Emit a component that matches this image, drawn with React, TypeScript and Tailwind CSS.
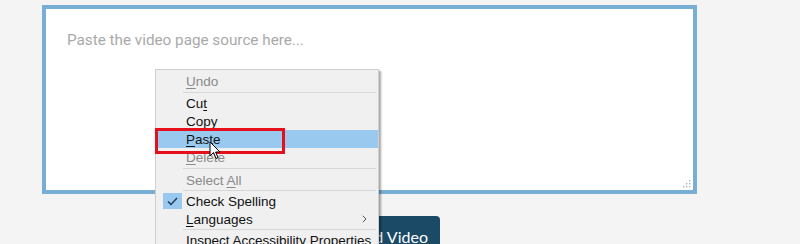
import React from 'react';

const menuFont = { fontFamily: '"Liberation Sans", Arial, sans-serif' };

function Item({
    children,
    disabled,
    active,
    checked,
    submenu,
}: {
    children: React.ReactNode;
    disabled?: boolean;
    active?: boolean;
    checked?: boolean;
    submenu?: boolean;
}) {
    return (
        <div className={`relative flex h-[18px] items-center whitespace-nowrap ${active ? 'bg-[#99c9ef]' : ''}`}>
            <div className="flex w-[30px] shrink-0 justify-center pl-[3px]">
                {checked && (
                    <div className="flex h-[16px] w-[19px] items-center justify-center bg-[#99c9ef]">
                        <svg width="11" height="9" viewBox="0 0 11 9" fill="none">
                            <path d="M1 4.5 L4 7.5 L10 1" stroke="#1e3750" strokeWidth="1.4" />
                        </svg>
                    </div>
                )}
            </div>
            <span className={`pt-[2px] text-[13.5px] leading-none ${disabled ? 'text-[#8a8a8a]' : 'text-[#111]'}`}>{children}</span>
            {submenu && (
                <svg className="absolute right-[11px]" width="5" height="8" viewBox="0 0 5 8" fill="none">
                    <path d="M0.8 0.8 L4 4 L0.8 7.2" stroke="#555" strokeWidth="1" />
                </svg>
            )}
        </div>
    );
}

function Sep({ h = 4 }: { h?: number }) {
    return (
        <div className={`flex items-center pl-[27px] pr-[2px] ${h === 5 ? 'h-[5px]' : h === 3 ? 'h-[3px]' : 'h-[4px]'}`}>
            <div className="h-px w-full bg-[#d7d7d7]" />
        </div>
    );
}

const U = ({ c }: { c: string }) => <span className="underline underline-offset-2">{c}</span>;

export default function App() {
    return (
        <div className="relative h-[244px] w-[800px] overflow-hidden bg-[#f4f4f4]">
            <div className="flex w-[697px] flex-col items-center pl-[42px] pt-[5px]">
                {/* textarea */}
                <div className="relative h-[189px] w-full border-[4px] border-[#78aed5] bg-white px-[21px] pt-[21px]">
                    <p
                        className="text-[15.25px] leading-[20px] text-[#a9a9a9]"
                        style={{ fontFamily: 'Roboto, "Noto Sans", sans-serif' }}
                    >
                        Paste the video page source here...
                    </p>
                    <svg className="absolute bottom-[2px] right-[2px]" width="9" height="9" viewBox="0 0 9 9">
                        <g fill="#b5b5b5">
                            <rect x="7" y="1" width="1.4" height="1.4" />
                            <rect x="4" y="4" width="1.4" height="1.4" />
                            <rect x="7" y="4" width="1.4" height="1.4" />
                            <rect x="1" y="7" width="1.4" height="1.4" />
                            <rect x="4" y="7" width="1.4" height="1.4" />
                            <rect x="7" y="7" width="1.4" height="1.4" />
                        </g>
                    </svg>
                </div>

                <button
                    className="mt-[22px] h-[40px] rounded-[4px] bg-[#1b4a67] px-[12px] pt-[2px] text-[16px] text-white"
                    style={{ fontFamily: 'Lato, "Noto Sans", sans-serif' }}
                >
                    Download Video
                </button>
            </div>

            {/* context menu */}
            <div
                className="absolute left-[155px] top-[69px] w-[224px] border border-[#cfcfcf] bg-[#f0f0f0] pt-[2px] shadow-[2px_2px_2px_rgba(0,0,0,0.35)]"
                style={menuFont}
            >
                <Item disabled>
                    <U c="U" />ndo
                </Item>
                <Sep />
                <Item>
                    Cu<U c="t" />
                </Item>
                <Item>
                    <U c="C" />opy
                </Item>
                <Item active>
                    <U c="P" />aste
                </Item>
                <Item disabled>
                    <U c="D" />elete
                </Item>
                <Sep h={5} />
                <Item disabled>
                    Select <U c="A" />ll
                </Item>
                <Sep h={3} />
                <Item checked>Check Spelling</Item>
                <Item submenu>
                    <U c="L" />anguages
                </Item>
                <Sep h={3} />
                <Item>Inspect Accessibility Properties</Item>
            </div>

            {/* red highlight box */}
            <div className="pointer-events-none absolute left-[155px] top-[128px] h-[26px] w-[130px] border-[3px] border-[#e5101a]" />

            {/* mouse pointer */}
            <svg className="absolute left-[209px] top-[141px]" width="12" height="19" viewBox="0 0 12 19">
                <path d="M1 1 L1 15 L4.5 11.5 L7 17.5 L9 16.6 L6.6 11 L11 11 Z" fill="white" stroke="black" strokeWidth="1" strokeLinejoin="round" />
            </svg>
        </div>
    );
}
